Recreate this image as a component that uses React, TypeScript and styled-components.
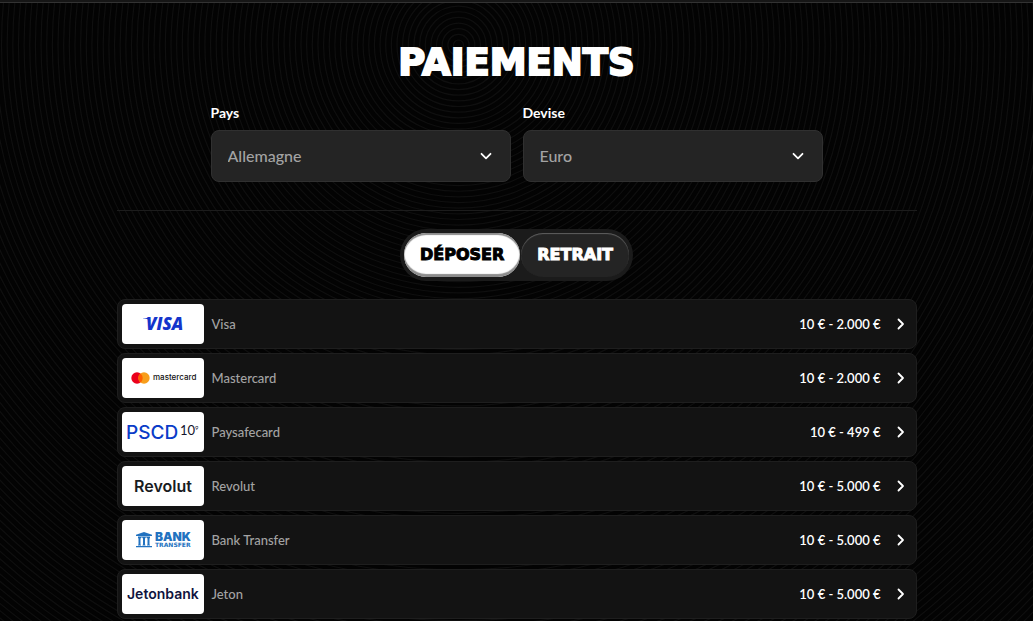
import React, { useState } from "react";
import styled, { createGlobalStyle, css } from "styled-components";

const bodyFont = `Lato, "Noto Sans", sans-serif`;
const displayFont = `"DejaVu Sans", Inter, sans-serif`;

const GlobalStyle = createGlobalStyle`
  *, *::before, *::after { box-sizing: border-box; }
  html { background: #030303; }
  body {
    margin: 0;
    height: 100vh;
    overflow: hidden;
    color: #fff;
    font-family: ${bodyFont};
  }
  button, select { font: inherit; }
`;

const Page = styled.div`
  position: relative;
  min-height: 100vh;
  overflow: hidden;
`;

const Rings = styled.svg`
  position: absolute;
  inset: 0;
  z-index: -1;
  width: 100%;
  height: 100%;
`;

const TopBar = styled.header`
  height: 3px;
  background: #161616;
  border-bottom: 1px solid #333;
`;

const Main = styled.main`
  width: 100%;
  max-width: 800px;
  margin: 0 auto;
  padding-top: 40px;
`;

const Title = styled.h1`
  margin: 0;
  font: 700 37px/40px ${displayFont};
  text-align: center;
  text-transform: uppercase;
  -webkit-text-stroke: 2px #fff;
`;

const Filters = styled.form`
  display: grid;
  grid-template-columns: 1fr 1fr;
  gap: 12px;
  max-width: 612px;
  margin: 0 auto;
  padding: 20px 0 28px;
`;

const Field = styled.div`
  display: grid;
  gap: 7px;
`;

const FieldLabel = styled.label`
  font-size: 14px;
  font-weight: 700;
  line-height: 20px;
`;

const SelectBox = styled.div`
  display: grid;
  align-items: center;

  > * { grid-area: 1 / 1; }
  > svg {
    justify-self: end;
    margin-right: 19px;
    pointer-events: none;
  }
`;

const Select = styled.select`
  appearance: none;
  width: 100%;
  height: 52px;
  padding: 0 48px 2px 16px;
  border: 1px solid #303030;
  border-radius: 8px;
  background: #242424;
  color: #a3a3a3;
  font-size: 16px;
  font-weight: 500;
`;

const Divider = styled.hr`
  margin: 0 0 18px;
  border: 0;
  border-top: 1px solid #1c1c1c;
`;

const Switcher = styled.div`
  display: flex;
  gap: 1px;
  width: fit-content;
  margin: 0 auto 18px;
  padding: 4px;
  border-radius: 26px;
  background: #1b1b1b;
`;

const SwitchButton = styled.button<{ $active: boolean }>`
  height: 44px;
  padding: 0 16px;
  border: 0;
  border-radius: 22px;
  font: 700 16px/20px ${displayFont};
  text-transform: uppercase;
  -webkit-text-stroke: 1px currentColor;
  cursor: pointer;
  ${({ $active }) =>
    $active
      ? css`
          background: #fff;
          color: #000;
          box-shadow: inset 0 2px 1px #8c8c8c, inset 0 -3px 1px #8c8c8c;
        `
      : css`
          background: #242424;
          color: #fff;
          box-shadow: inset 0 1px 1px #606060;
        `}
`;

const Methods = styled.ul`
  display: grid;
  gap: 4px;
  margin: 0;
  padding: 0;
  list-style: none;
`;

const MethodButton = styled.button`
  display: flex;
  align-items: center;
  width: 100%;
  height: 50px;
  padding: 0 11px 0 4px;
  border: 1px solid #1e1e1e;
  border-radius: 8px;
  background: #131313;
  color: #fff;
  font-size: 13px;
  line-height: 20px;
  text-align: left;
  cursor: pointer;
`;

const LogoTile = styled.svg`
  flex: none;
  width: 82px;
  height: 40px;
  border-radius: 4px;
  background: #fff;
`;

const MethodName = styled.span`
  flex: 1;
  padding-left: 8px;
  color: #a3a3a3;
  font-weight: 500;
`;

const Limits = styled.span`
  margin-right: 16px;
  font-weight: 600;
`;

const ChevronDown = () => (
  <svg width="12" height="8" viewBox="0 0 12 8" fill="none" aria-hidden="true">
    <path d="M1.5 1.8 6 6.300l4.500-4.500" stroke="#fff" strokeWidth="1.800" strokeLinecap="round" strokeLinejoin="round" />
  </svg>
);

const ChevronRight = () => (
  <svg width="8" height="12" viewBox="0 0 8 12" fill="none" aria-hidden="true">
    <path d="m1.500 1.500 4.500 4.500-4.500 4.500" stroke="#fff" strokeWidth="1.800" strokeLinecap="round" strokeLinejoin="round" />
  </svg>
);

const VisaLogo = () => (
  <LogoTile viewBox="0 0 82 40" role="img" aria-label="Visa">
    <text x="24" y="26" fill="#1434cb" fontFamily="Open Sans, sans-serif" fontSize="17" fontWeight="800" fontStyle="italic">VISA</text>
    <path d="M21 14h6l1.500 3c-2-1.600-4.500-2.400-7.500-2.700Z" fill="#1434cb" />
  </LogoTile>
);

const MastercardLogo = () => (
  <LogoTile viewBox="0 0 82 40" role="img" aria-label="Mastercard">
    <circle cx="15" cy="20" r="5.700" fill="#eb001b" />
    <circle cx="22" cy="20" r="5.700" fill="#f79e1b" />
    <path d="M18.500 15.500a5.700 5.700 0 0 1 0 9 5.700 5.700 0 0 1 0-9Z" fill="#ff5f00" />
    <text x="31" y="22" fill="#111" fontFamily="Inter, sans-serif" fontSize="8" fontWeight="500">mastercard</text>
  </LogoTile>
);

const PaysafecardLogo = () => (
  <LogoTile viewBox="0 0 82 40" role="img" aria-label="PSCD 10⁹">
    <text x="4" y="27" fill="#0a3cc8" fontFamily="Inter, sans-serif" fontSize="19" fontWeight="500">PSCD</text>
    <text x="58" y="23" fill="#14142b" fontFamily="Lato, sans-serif" fontSize="13">10</text>
    <text x="73" y="18" fill="#14142b" fontFamily="Lato, sans-serif" fontSize="6">9</text>
  </LogoTile>
);

const RevolutLogo = () => (
  <LogoTile viewBox="0 0 82 40" role="img" aria-label="Revolut">
    <text x="12" y="26" fill="#191c1f" fontFamily="Inter, sans-serif" fontSize="16" fontWeight="600">Revolut</text>
  </LogoTile>
);

const BankLogo = () => (
  <LogoTile viewBox="0 0 82 40" role="img" aria-label="Bank Transfer">
    <g fill="#2272c0">
      <path d="M14 16v-1.200L22 12l8 2.800V16Z" />
      <path d="M16 16.500h12v1H16ZM16 17h3v1l-.5.500v6l.5.500v.500h-3V25l.5-.5v-6L16 18ZM20.500 17h3v1l-.5.500v6l.5.500v.500h-3V25l.5-.5v-6l-.5-.5ZM25 17h3v1l-.5.500v6l.5.500v.500h-3V25l.5-.5v-6L25 18ZM14 26h16v1.300H14Z" />
      <text x="33" y="21" fontFamily="Inter, sans-serif" fontSize="12" fontWeight="900">BANK</text>
      <text x="33" y="27" fontFamily="DejaVu Sans, sans-serif" fontSize="6" fontWeight="700">TRANSFER</text>
    </g>
  </LogoTile>
);

const JetonLogo = () => (
  <LogoTile viewBox="0 0 82 40" role="img" aria-label="Jetonbank">
    <text x="5" y="25" fill="#0f1440" fontFamily="Inter, sans-serif" fontSize="14" fontWeight="600">Jetonbank</text>
  </LogoTile>
);

const methods = [
  { name: "Visa", limits: "10 € - 2.000 €", Logo: VisaLogo },
  { name: "Mastercard", limits: "10 € - 2.000 €", Logo: MastercardLogo },
  { name: "Paysafecard", limits: "10 € - 499 €", Logo: PaysafecardLogo },
  { name: "Revolut", limits: "10 € - 5.000 €", Logo: RevolutLogo },
  { name: "Bank Transfer", limits: "10 € - 5.000 €", Logo: BankLogo },
  { name: "Jeton", limits: "10 € - 5.000 €", Logo: JetonLogo },
];

const ringRadii = Array.from({ length: 150 }, (_, i) => 5 + i * 5.65);

export default function App() {
  const [tab, setTab] = useState("Déposer");
  return (
    <Page>
      <GlobalStyle />
      <Rings aria-hidden="true">
        {ringRadii.map((r) => (
          <circle key={r} cx="458.500" cy="45" r={r} fill="none" stroke="#0f0f0f" strokeWidth="1.200" />
        ))}
      </Rings>
      <TopBar />
      <Main>
        <Title>Paiements</Title>
        <Filters>
          <Field>
            <FieldLabel htmlFor="country">Pays</FieldLabel>
            <SelectBox>
              <Select id="country">
                <option>Allemagne</option>
              </Select>
              <ChevronDown />
            </SelectBox>
          </Field>
          <Field>
            <FieldLabel htmlFor="currency">Devise</FieldLabel>
            <SelectBox>
              <Select id="currency">
                <option>Euro</option>
              </Select>
              <ChevronDown />
            </SelectBox>
          </Field>
        </Filters>
        <Divider />
        <Switcher>
          {["Déposer", "Retrait"].map((name) => (
            <SwitchButton key={name} type="button" $active={tab === name} aria-pressed={tab === name} onClick={() => setTab(name)}>
              {name}
            </SwitchButton>
          ))}
        </Switcher>
        <Methods>
          {methods.map(({ name, limits, Logo }) => (
            <li key={name}>
              <MethodButton type="button">
                <Logo />
                <MethodName>{name}</MethodName>
                <Limits>{limits}</Limits>
                <ChevronRight />
              </MethodButton>
            </li>
          ))}
        </Methods>
      </Main>
    </Page>
  );
}
